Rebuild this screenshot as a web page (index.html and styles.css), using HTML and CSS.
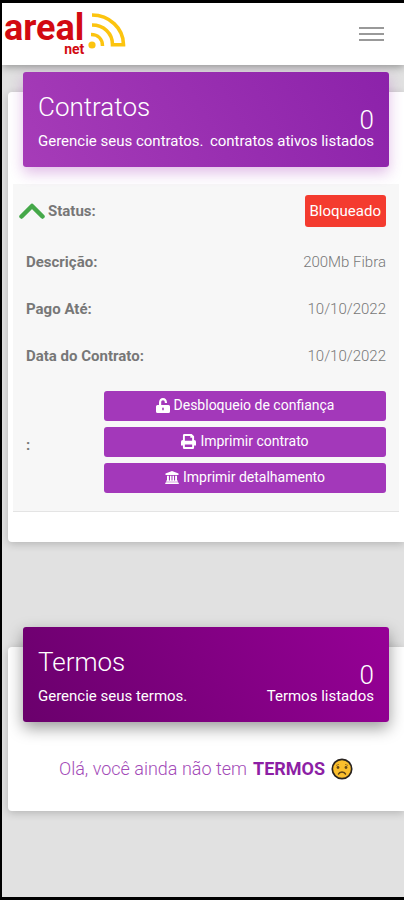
FILE: index.html
```html
<!DOCTYPE html>
<html lang="pt-BR">
<head>
    <meta charset="UTF-8">
    <meta name="viewport" content="width=device-width, initial-scale=1.0">
    <title>Areal Net - Contratos</title>
    <link rel="stylesheet" href="styles.css">
</head>
<body>
    <header class="navbar">
        <a class="logo" href="#" aria-label="Areal Net">
            <span class="logo-text">
                <span class="logo-name">areal</span>
                <span class="logo-sub">net</span>
            </span>
            <svg class="logo-wave" viewBox="0 0 38 36" width="38" height="36" fill="none" stroke="#fcc40f">
                <circle cx="4" cy="32" r="3.6" fill="#fcc40f" stroke="none"/>
                <path d="M3 21.500C10 21.500 14.500 26 14.500 33" stroke-width="3.500"/>
                <path d="M4 2C21 2 35.500 15 35.500 31.700H24.500C24.500 20 15.500 12 4 12" stroke-width="3.600"/>
            </svg>
        </a>
        <button class="menu-button" type="button" aria-label="Menu">
            <span class="menu-bar"></span>
            <span class="menu-bar"></span>
            <span class="menu-bar"></span>
        </button>
    </header>

    <main class="content">
        <section class="card">
            <div class="card-header">
                <h4 class="card-title">Contratos</h4>
                <div class="card-info">
                    <p class="card-category">Gerencie seus contratos.</p>
                    <p class="card-total"><span class="card-number">0</span>contratos ativos listados</p>
                </div>
            </div>
            <dl class="contract">
                <div class="contract-row status-row">
                    <dt>
                        <svg class="chevron" viewBox="0 0 26 16" width="26" height="16" fill="none" stroke="#45a849" stroke-width="4.500" stroke-linecap="round" stroke-linejoin="round">
                            <path d="M2.500 13.500L13 3L23.500 13.500"/>
                        </svg>
                        Status:
                    </dt>
                    <dd><span class="badge">Bloqueado</span></dd>
                </div>
                <div class="contract-row">
                    <dt>Descrição:</dt>
                    <dd>200Mb Fibra</dd>
                </div>
                <div class="contract-row">
                    <dt>Pago Até:</dt>
                    <dd>10/10/2022</dd>
                </div>
                <div class="contract-row">
                    <dt>Data do Contrato:</dt>
                    <dd>10/10/2022</dd>
                </div>
                <div class="contract-row actions-row">
                    <dt>:</dt>
                    <dd class="actions">
                        <button class="btn" type="button">
                            <svg viewBox="0 0 14 15" width="14" height="15" fill="#fff">
                                <path fill-rule="evenodd" d="M1.500 7H3V4.500C3 2 4.700 0 7 0S11 2 11 4.500V5H8.800V4.500C8.800 3 8.200 2.200 7 2.200S5.200 3 5.200 4.500V7H12.500Q14 7 14 8.500V13.500Q14 15 12.500 15H1.500Q0 15 0 13.500V8.500Q0 7 1.500 7ZM7 9.500A.800.800 0 0 0 6.200 10.300V11.600A.800.800 0 0 0 7.800 11.600V10.300A.800.800 0 0 0 7 9.500Z"/>
                            </svg>
                            Desbloqueio de confiança
                        </button>
                        <button class="btn" type="button">
                            <svg viewBox="0 0 14 14" width="15" height="15" fill="#fff">
                                <path fill-rule="evenodd" d="M1.800 5.500V1.300Q1.800 0 3.100 0H10L12.200 2.200V5.500Q14 5.700 14 7.300V10.800H12.200V12.800Q12.200 14 11 14H3Q1.800 14 1.800 12.800V10.800H0V7.300Q0 5.700 1.800 5.500ZM3.600 1.800V6.200H10.400V3.500H8.700V1.800ZM3.600 9.800V12.200H10.400V9.800Z"/>
                            </svg>
                            Imprimir contrato
                        </button>
                        <button class="btn" type="button">
                            <svg viewBox="0 0 14 13" width="14" height="13" fill="#fff">
                                <path d="M7 0L13.500 2.600V4H.500V2.600ZM2 4.800H3.900V9.500H5V4.800H6.500V9.500H7.500V4.800H9V9.500H10.100V4.800H12V9.500H12.800V10.700H1.200V9.500H2ZM.800 11.300H13.200L14 13H0Z"/>
                            </svg>
                            Imprimir detalhamento
                        </button>
                    </dd>
                </div>
            </dl>
        </section>

        <section class="card">
            <div class="card-header card-header-dark">
                <h4 class="card-title">Termos</h4>
                <div class="card-info">
                    <p class="card-category">Gerencie seus termos.</p>
                    <p class="card-total"><span class="card-number">0</span>Termos listados</p>
                </div>
            </div>
            <p class="empty">
                Olá, você ainda não tem <strong>TERMOS</strong>
                <svg class="sad-face" viewBox="0 0 22 22" width="22" height="22" fill="none">
                    <circle cx="11" cy="11" r="9.700" fill="#fbbf2c" stroke="#282320" stroke-width="1.700"/>
                    <path d="M5 7.500L8 6.300M14 6.300L17 7.500" stroke="#a87918"/>
                    <circle cx="7" cy="9.500" r="1.400" fill="#694b18"/>
                    <circle cx="15" cy="9.500" r="1.400" fill="#694b18"/>
                    <path d="M7.500 16C8.500 13.300 13.500 13.300 14.500 16" stroke="#5d4216" stroke-width="1.500" stroke-linecap="round"/>
                </svg>
            </p>
        </section>
    </main>
</body>
</html>
```
FILE: styles.css
```css
* {
  box-sizing: border-box;
}

body {
  display: flex;
  flex-direction: column;
  min-height: 100vh;
  margin: 0;
  border: solid #000;
  border-width: 3px 0 3px 2px;
  background-color: #e1e1e1;
  color: #777;
  font-family: Roboto, "Liberation Sans", sans-serif;
  font-size: 15px;
  line-height: 20px;
}

h4, p, dl, dd {
  margin: 0;
}

.navbar {
  display: flex;
  justify-content: space-between;
  align-items: center;
  height: 62px;
  padding: 0 20px 0 2px;
  background-color: #fff;
  box-shadow: 0 2px 8px rgba(0, 0, 0, 0.35);
}

.logo {
  display: flex;
  gap: 4px;
  color: #d20a11;
  text-decoration: none;
}

.logo-text {
  display: flex;
  flex-direction: column;
  align-items: flex-end;
  font-weight: 700;
}

.logo-name {
  font-size: 36px;
  line-height: 30px;
}

.logo-sub {
  font-size: 14px;
  line-height: 12px;
}

.menu-button {
  display: flex;
  flex-direction: column;
  gap: 4px;
  padding: 0;
  border: none;
  background: none;
  cursor: pointer;
}

.menu-bar {
  width: 25px;
  height: 2px;
  background-color: #999;
}

.content {
  padding: 27px 0 0 6px;
}

.card {
  margin-bottom: 105px;
  padding: 0 5px 30px;
  border-radius: 4px 0 0 4px;
  background-color: #fff;
  box-shadow: 0 2px 8px rgba(0, 0, 0, 0.2);
}

.card:last-child {
  margin-bottom: 30px;
}

.card-header {
  position: relative;
  top: -20px;
  margin: 0 10px -3px;
  padding: 20px 15px 16px;
  border-radius: 3px;
  background: linear-gradient(60deg, #a63cb8, #8c22aa);
  box-shadow: 0 6px 14px rgba(156, 39, 176, 0.3);
  color: #fff;
}

.card-header-dark {
  background: linear-gradient(60deg, #6a006c, #960096);
  box-shadow: 0 6px 16px rgba(0, 0, 0, 0.4);
}

.card-title {
  font-size: 26px;
  font-weight: 300;
  line-height: 30px;
}

.card-info {
  display: flex;
  justify-content: space-between;
  align-items: flex-end;
  height: 29px;
}

.card-total {
  text-align: right;
}

.card-number {
  display: block;
  font-size: 26px;
  font-weight: 300;
  line-height: 22px;
}

.contract {
  border-bottom: 1px solid #e4e4e4;
  background-color: #f7f7f7;
}

.contract-row {
  display: flex;
  justify-content: space-between;
  align-items: center;
  min-height: 47px;
  padding: 0 13px;
}

.contract-row dt {
  font-weight: 700;
}

.contract-row dd {
  font-weight: 300;
}

.status-row {
  min-height: 54px;
  padding-left: 6px;
}

.status-row dt {
  display: flex;
  align-items: center;
  gap: 3px;
}

.badge {
  display: block;
  padding: 6px 5px;
  border-radius: 3px;
  background-color: #f43b2f;
  color: #fff;
  font-weight: 400;
}

.contract-row .actions {
  display: flex;
  flex-direction: column;
  gap: 6px;
  width: 282px;
  padding: 12px 0 18px;
}

.btn {
  display: flex;
  justify-content: center;
  align-items: center;
  gap: 4px;
  height: 30px;
  padding: 0 0 2px;
  border: none;
  border-radius: 3px;
  background-color: #a338ba;
  color: #fff;
  font-family: inherit;
  font-size: 14px;
  cursor: pointer;
}

.empty {
  display: flex;
  justify-content: center;
  align-items: center;
  gap: 6px;
  padding-top: 18px;
  color: #a34bb8;
  font-size: 18px;
  font-weight: 300;
  line-height: 24px;
}

.empty strong {
  color: #8d1fa5;
  font-weight: 700;
}
```
